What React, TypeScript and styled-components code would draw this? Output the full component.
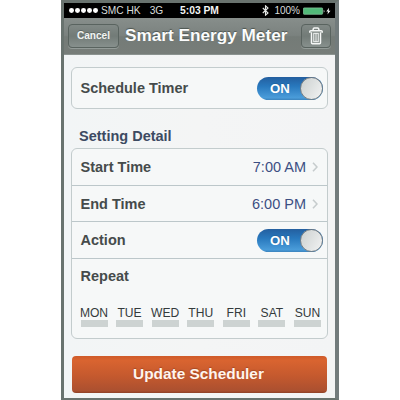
import React from 'react';
import styled, { createGlobalStyle } from 'styled-components';

const GlobalStyle = createGlobalStyle`
  * { box-sizing: border-box; }
  body { margin: 0; background: #fff; font-family: "Liberation Sans", Arial, sans-serif; }
`;

const Page = styled.div`
  width: 400px;
  height: 400px;
  padding-left: 61px;
  background: #fff;
  overflow: hidden;
`;

const Phone = styled.main`
  width: 278px;
  height: 400px;
  border: solid #69736f;
  border-width: 3px 4px 2px 3px;
  border-right-color: #727b7c;
  background: #f4f6f6;
  display: flex;
  flex-direction: column;
`;

const StatusBar = styled.header`
  height: 15px;
  flex: none;
  background: #000;
  color: #d9dddb;
  display: grid;
  grid-template-columns: 116px 1fr auto;
  align-items: center;
  padding: 0 4px 0 5px;
  white-space: nowrap;
  line-height: 15px;
`;

const Carrier = styled.div`
  display: flex;
  align-items: center;
  font-size: 10.2px;
`;

const SignalDots = styled.div`
  display: flex;
  gap: 1.1px;
  margin-right: 3.2px;
`;

const Dot = styled.i`
  width: 4.9px;
  height: 4.9px;
  border-radius: 50%;
  background: #fff;
`;

const Network = styled.span`
  margin-left: 9px;
`;

const Clock = styled.div`
  font-size: 10.3px;
  font-weight: bold;
  color: #f2f4f3;
  margin-left: -5px;
`;

const Power = styled.div`
  display: flex;
  align-items: center;
  font-size: 10px;
  svg { display: block; }
`;

const Percent = styled.span`
  margin: 0 3px 0 5px;
`;

const NavBar = styled.nav`
  height: 37px;
  flex: none;
  display: flex;
  align-items: center;
  padding: 0 4px 1px 4px;
  background: linear-gradient(#878e8b 0%, #7b827f 48%, #747b77 52%, #777d79 100%);
  border-bottom: 1px solid #8b9390;
`;

const NavButton = styled.button<{ $width: number }>`
  width: ${(p) => p.$width}px;
  height: 24px;
  padding: 0;
  display: flex;
  align-items: center;
  justify-content: center;
  border: 1px solid #59635f;
  border-radius: 4px;
  background: linear-gradient(#818986, #727b77 50%, #87908d);
  box-shadow: 0 1px 0 #939b98;
  color: #f1f4f2;
  font: bold 10.1px "Liberation Sans", Arial, sans-serif;
  text-shadow: 0 -1px 0 #5d6662;
`;

const Title = styled.h1`
  flex: 1;
  margin: -2px 0 0 6px;
  font-size: 17.2px;
  line-height: 24px;
  color: #fbfcfc;
  text-shadow: 0 -1px 1px #4c5551;
  white-space: nowrap;
`;

const Content = styled.section`
  flex: 1;
  padding: 12px 7px 0;
  display: flex;
  flex-direction: column;
  background: linear-gradient(90deg, #f2f5f6, #f4f5f5 50%, #f3f4f5);
`;

const Card = styled.div`
  border: 1px solid #c3cccd;
  border-radius: 6px;
  background: #f6f8f8;
`;

const Row = styled.div<{ $height: number }>`
  height: ${(p) => p.$height}px;
  display: flex;
  align-items: center;
  justify-content: space-between;
  padding: 0 4px 0 8.5px;
  & + & { border-top: 1px solid #bcc7ca; }
`;

const RowLabel = styled.span`
  font-size: 14.5px;
  font-weight: bold;
  color: #454b4b;
`;

const SectionTitle = styled.h2`
  margin: 0 0 0 8px;
  height: 39px;
  padding-top: 19px;
  font-size: 14.5px;
  line-height: 17px;
  color: #3c4a61;
`;

const Value = styled.span`
  display: flex;
  align-items: center;
  gap: 5.5px;
  margin-right: 5.5px;
  font-size: 14.5px;
  color: #3c4f83;
`;

const Track = styled.span`
  width: 66px;
  height: 23px;
  border-radius: 12px;
  display: flex;
  align-items: center;
  justify-content: space-between;
  padding-left: 13px;
  background: linear-gradient(#245f9f, #2878bd 40%, #4a9cd9 90%, #3b83bd);
  color: #fff;
  font-size: 13.2px;
  font-weight: bold;
  text-shadow: 0 -1px 1px #21649f;
`;

const Knob = styled.i`
  width: 23px;
  height: 23px;
  border-radius: 50%;
  border: 1px solid #777f84;
  background: linear-gradient(120deg, #cbd0cf, #e8eaea 75%, #f3f3f3);
`;

const Repeat = styled.div`
  height: 80px;
  border-top: 1px solid #bcc7ca;
  padding: 8px 6px 0 8.5px;
`;

const Days = styled.div`
  display: grid;
  grid-template-columns: repeat(7, 27px);
  justify-content: space-between;
  margin-top: 21px;
`;

const Day = styled.div`
  display: flex;
  flex-direction: column;
  align-items: center;
  font-size: 12.1px;
  line-height: 14px;
  color: #343b3c;
`;

const DayBar = styled.i`
  width: 27px;
  height: 7px;
  background: #cdd3d2;
`;

const UpdateButton = styled.button`
  height: 37px;
  margin: 17px 1px 0;
  padding: 0 2px 2px 0;
  border: 0;
  border-radius: 4px;
  background: linear-gradient(#cf5a29, #d96430 12%, #c4592e 55%, #ab5030 94%, #8e4127);
  color: #fff5ee;
  font: bold 15.4px "Liberation Sans", Arial, sans-serif;
  text-shadow: 0 -1px 1px #a54924;
`;

const Switch = () => (
  <Track>
    ON
    <Knob />
  </Track>
);

const Chevron = () => (
  <svg width="6" height="10" viewBox="0 0 6 10" fill="none" stroke="#c6cccd" strokeWidth="1.6">
    <path d="M1 .8 5 5 1 9.2" />
  </svg>
);

const DAYS = ['MON', 'TUE', 'WED', 'THU', 'FRI', 'SAT', 'SUN'];

export default function App() {
  return (
    <Page>
      <GlobalStyle />
      <Phone>
        <StatusBar>
          <Carrier>
            <SignalDots>
              {[0, 1, 2, 3, 4].map((n) => (
                <Dot key={n} />
              ))}
            </SignalDots>
            SMC HK
            <Network>3G</Network>
          </Carrier>
          <Clock>5:03 PM</Clock>
          <Power>
            <svg width="7" height="11" viewBox="0 0 7 11" fill="none" stroke="#e5e8e6" strokeWidth="1.1">
              <path d="M.8 3 6 8 3.5 10.2V.8L6 3 .8 8" />
            </svg>
            <Percent>100%</Percent>
            <svg width="28" height="8" viewBox="0 0 28 8">
              <rect x=".4" y=".9" width="19.2" height="6.4" rx=".7" fill="#52b979" stroke="#8bcaa2" strokeWidth=".7" />
              <path d="M20.6 3v2.4q1-.3 1-1.2t-1-1.2Z" fill="#b9c4be" />
              <path d="M26 .8 23.3 4.6h1.8L24.4 7.5 27.5 3.7h-1.8Z" fill="#f5f7f6" />
            </svg>
          </Power>
        </StatusBar>
        <NavBar>
          <NavButton $width={51}>Cancel</NavButton>
          <Title>Smart Energy Meter</Title>
          <NavButton $width={30} aria-label="Delete">
            <svg width="14" height="18" viewBox="0 0 14 18" fill="none" stroke="#f5f7f6" strokeWidth="1.5">
              <path d="M.8 5.8V4.6Q.8 3.7 1.7 3.7H12.3Q13.2 3.7 13.2 4.6V5.8M4 3.5Q4.2 1 5.3 1H8.7Q9.8 1 10 3.5M2.5 5.2V15.8Q2.5 16.7 3.4 16.7H10.6Q11.5 16.7 11.5 15.8V5.2" />
              <path d="M4.8 6.2v8.6H9.2V6.2ZM7 6.2v8.6" strokeWidth="1.1" />
            </svg>
          </NavButton>
        </NavBar>
        <Content>
          <Card>
            <Row $height={40}>
              <RowLabel>Schedule Timer</RowLabel>
              <Switch />
            </Row>
          </Card>
          <SectionTitle>Setting Detail</SectionTitle>
          <Card>
            <Row $height={36}>
              <RowLabel>Start Time</RowLabel>
              <Value>
                7:00 AM <Chevron />
              </Value>
            </Row>
            <Row $height={36}>
              <RowLabel>End Time</RowLabel>
              <Value>
                6:00 PM <Chevron />
              </Value>
            </Row>
            <Row $height={37}>
              <RowLabel>Action</RowLabel>
              <Switch />
            </Row>
            <Repeat>
              <RowLabel>Repeat</RowLabel>
              <Days>
                {DAYS.map((day) => (
                  <Day key={day}>
                    {day}
                    <DayBar />
                  </Day>
                ))}
              </Days>
            </Repeat>
          </Card>
          <UpdateButton>Update Scheduler</UpdateButton>
        </Content>
      </Phone>
    </Page>
  );
}
